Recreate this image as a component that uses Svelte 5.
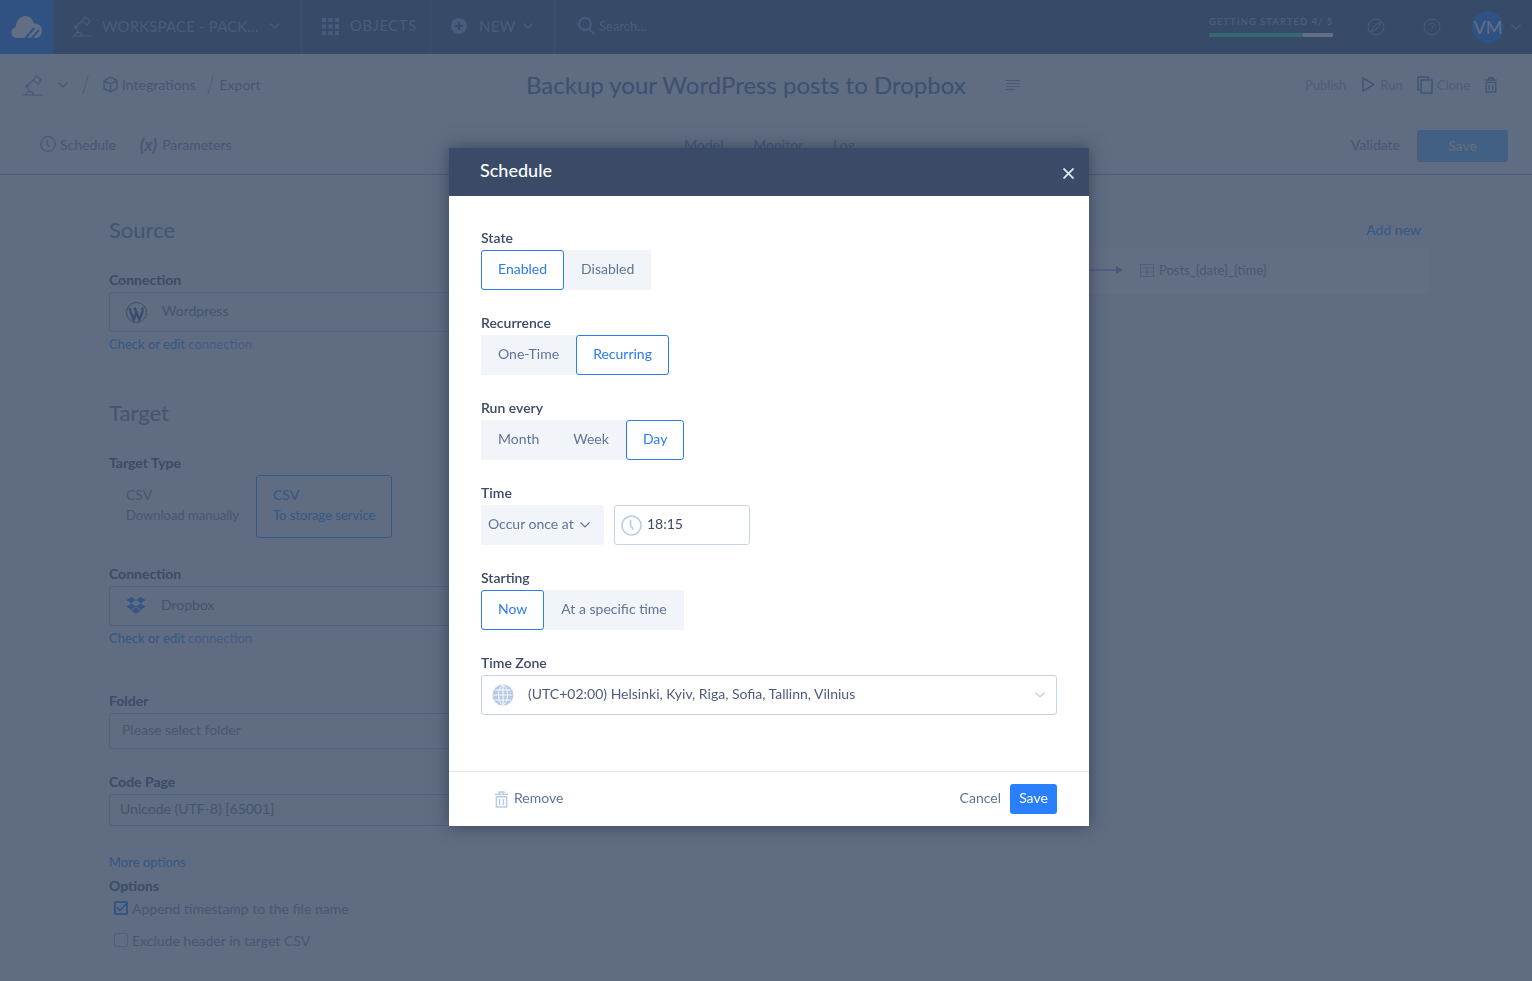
<script>
  let state_ = $state("Enabled");
  let recurrence = $state("Recurring");
  let runEvery = $state("Day");
  let starting = $state("Now");

  const groups = [
    { label: "State", options: ["Enabled", "Disabled"], get: () => state_, set: (v) => (state_ = v) },
    { label: "Recurrence", options: ["One-Time", "Recurring"], get: () => recurrence, set: (v) => (recurrence = v) },
    { label: "Run every", options: ["Month", "Week", "Day"], get: () => runEvery, set: (v) => (runEvery = v) },
  ];
</script>

{#snippet lamp(cls)}
  <svg class={cls} viewBox="0 0 20 22" fill="none" stroke="currentColor" stroke-width="1.100">
    <path d="M0 21h20M3 20.500c0-2 1.500-3 3.500-3s3.500 1 3.500 3M6 17.500 4 12l6-6M4 12l-1.500 1" />
    <path d="m10 6 3-4 5 3.500-2.500 4.500z" />
    <circle cx="4" cy="12" r="1.200" />
  </svg>
{/snippet}

{#snippet chevron(cls)}
  <svg class={cls} viewBox="0 0 10 6" fill="none" stroke="currentColor" stroke-width="1.200"><path d="m.5.5 4.500 4.500L9.500.5" /></svg>
{/snippet}

{#snippet clock(cls)}
  <svg class={cls} viewBox="0 0 22 22" fill="none" stroke="currentColor" stroke-width="1.700">
    <circle cx="11" cy="11" r="10" />
    <path d="M10 5v6.500l3 3.500" />
  </svg>
{/snippet}

{#snippet trash(cls)}
  <svg class={cls} viewBox="0 0 16 18" fill="none" stroke="currentColor" stroke-width="1.500">
    <path d="M1 3.500h14M5.500 3V1h5v2M2.500 6h11v11h-11zM6 8.500V15M10 8.500V15" />
  </svg>
{/snippet}

<div class="page">
  <header class="topbar">
    <div class="logo">
      <svg viewBox="0 0 32 24" width="32" height="24">
        <path fill="#fff" d="M6 23a5.500 5.500 0 0 1-1.500-10.800C5 6 9 1 14 1c4.500 0 8 3 9 7.500 4-.5 8 2.500 8 7.200 0 4-3 7.300-7 7.300z" />
        <path stroke="#6faeff" stroke-width="2" d="M14 24 23 13M20 24l8-9" />
      </svg>
    </div>
    <div class="top-item workspace">
      {@render lamp("top-lamp")}
      <span>WORKSPACE - PACK...</span>
      {@render chevron("chev")}
    </div>
    <div class="top-item objects">
      <svg width="17" height="17" viewBox="0 0 17 17" fill="currentColor">
        {#each [0, 6.500, 13] as y}
          {#each [0, 6.500, 13] as x}
            <rect {x} {y} width="4" height="4" />
          {/each}
        {/each}
      </svg>
      <span>OBJECTS</span>
    </div>
    <div class="top-item newitem">
      <svg width="16" height="16" viewBox="0 0 16 16">
        <circle cx="8" cy="8" r="8" fill="currentColor" />
        <path d="M8 4v8M4 8h8" stroke="#8397ae" stroke-width="2" />
      </svg>
      <span>NEW</span>
      {@render chevron("chev")}
    </div>
    <div class="top-search">
      <svg width="17" height="18" viewBox="0 0 17 18" fill="none" stroke="currentColor" stroke-width="1.800">
        <circle cx="7" cy="7" r="6" /><path d="m11 11.500 5 5.500" />
      </svg>
      <span>Search...</span>
    </div>
    <div class="top-right">
      <div class="getting">
        <span>GETTING STARTED 4/ 5</span>
        <div class="progress"><div class="progress-fill"></div></div>
      </div>
      <svg class="round-icon" viewBox="0 0 18 18" fill="none" stroke="currentColor">
        <circle cx="9" cy="9" r="8" />
        <path d="m4 14 3.500-6.500L14 4l-3.500 6.500z" />
      </svg>
      <svg class="round-icon help" viewBox="0 0 18 18" fill="none" stroke="currentColor">
        <circle cx="9" cy="9" r="8" />
        <path d="M6.800 7c0-3 4.600-3 4.600 0 0 1.800-2.400 1.800-2.400 3.800M9 12.300v1.200" />
      </svg>
      <div class="avatar">VM</div>
      {@render chevron("chev avatar-chev")}
    </div>
  </header>

  <div class="crumbs">
    <div class="crumb-left">
      {@render lamp("crumb-lamp")}
      {@render chevron("chev crumb-chev")}
      <span class="slash first"></span>
      <svg class="cube" width="15" height="17" viewBox="0 0 15 17" fill="none" stroke="currentColor" stroke-width="1.500">
        <path d="m7.500 1 6.500 3.500v8L7.500 16 1 12.500v-8zM1.500 5l6 3 6-3M7.500 8v8" />
      </svg>
      <span class="crumb-text">Integrations</span>
      <span class="slash"></span>
      <span class="crumb-text export">Export</span>
    </div>
    <h1>Backup your WordPress posts to Dropbox</h1>
    <svg class="lines" width="14" height="12" viewBox="0 0 14 12" stroke="currentColor">
      <path d="M0 1.500h14M0 4.500h14M0 7.500h14M0 10.500h9" />
    </svg>
    <div class="crumb-actions">
      <span class="publish">Publish</span>
      <svg width="13" height="15" viewBox="0 0 13 15" fill="none" stroke="currentColor" stroke-width="1.500"><path d="m1 1 11 6.500L1 14z" /></svg>
      <span class="run">Run</span>
      <svg width="16" height="18" viewBox="0 0 16 18" fill="none" stroke="currentColor" stroke-width="1.500"><path d="M3 14H1V1h10v2M4 4h11v13H4z" /></svg>
      <span class="clone">Clone</span>
      {@render trash("crumb-trash")}
    </div>
  </div>

  <div class="toolbar">
    <div class="tool-left">
      {@render clock("tool-clock")}
      <span class="tool-schedule">Schedule</span>
      <span class="fx">(x)</span>
      <span>Parameters</span>
    </div>
    <nav class="tabs">
      <span class="tab-active">Model</span>
      <span>Monitor</span>
      <span>Log</span>
    </nav>
    <div class="tool-right">
      <span>Validate</span>
      <button class="page-save">Save</button>
    </div>
  </div>

  <main class="content">
    <section class="form">
      <h2>Source</h2>
      <div class="flabel conn1">Connection</div>
      <div class="field tall"><svg class="wp" viewBox="0 0 22 22" fill="none" stroke="currentColor">
          <circle cx="11" cy="11" r="10.500" />
          <path stroke-width="2.400" d="m3.500 6.500 4.500 12 3-8-2-4.500M9 6.500l5 12 3.500-9c.5-1.500 0-2.500-.8-3.500" />
        </svg><span>Wordpress</span></div>
      <div class="hint"><em>Check or edit</em> connection</div>

      <h2 class="target">Target</h2>
      <div class="flabel type">Target Type</div>
      <div class="cards">
        <div class="card"><div>CSV</div><small>Download manually</small></div>
        <div class="card on"><div>CSV</div><small>To storage service</small></div>
      </div>

      <div class="flabel conn2">Connection</div>
      <div class="field tall"><svg class="db" viewBox="0 0 22 20" fill="currentColor">
          <path d="m6 0 5 3.200-5 3.300L1 3.200zM16 0l5 3.200-5 3.300-5-3.300zM6 6.800l5 3.200-5 3.300L1 10zM16 6.800l5 3.200-5 3.300-5-3.300zM11 11l5 3.300-5 3.200-5-3.200z" />
        </svg><span>Dropbox</span></div>
      <div class="hint"><em>Check or edit</em> connection</div>

      <div class="flabel folder">Folder</div>
      <div class="field mid placeholder"><span>Please select folder</span></div>
      <div class="flabel code">Code Page</div>
      <div class="field short"><span>Unicode (UTF-8) [65001]</span></div>

      <div class="more">More options</div>
      <div class="flabel options">Options</div>
      <div class="check first"><span class="box on">
          <svg width="14" height="14" viewBox="0 0 14 14" fill="none" stroke="currentColor" stroke-width="1.800"><path d="m3 6.500 3 3L13 2" /></svg>
        </span>Append timestamp to the file name</div>
      <div class="check"><span class="box"></span>Exclude header in target CSV</div>
    </section>

    <aside class="side">
      <div class="add-new">Add new</div>
      <div class="band">
        <svg class="arrow" width="36" height="8" viewBox="0 0 36 8"><path d="M0 4h30" stroke="#aec5ed" stroke-width="1.300" /><path d="m29 0 7 4-7 4z" fill="#aec5ed" /></svg>
        <svg class="table" width="14" height="14" viewBox="0 0 14 14" fill="none" stroke="currentColor"><rect x=".5" y="1.500" width="13" height="12" /><path d="M.5 5h13M.5 9h13M7 5v8.500" /></svg>
        <span>Posts_{"{"}date{"}"}_{"{"}time{"}"}</span>
      </div>
    </aside>
  </main>
</div>

<div class="overlay">
  <div class="modal">
    <div class="modal-head">
      <span>Schedule</span>
      <svg width="11" height="11" viewBox="0 0 11 11" stroke="#dfe7f4" stroke-width="1.800"><path d="m.5.5 10 10M10.500.5l-10 10" /></svg>
    </div>
    <div class="modal-body">
      {#each groups as g}
        <div class="group">
          <div class="label">{g.label}</div>
          <div class="segments">
            {#each g.options as o}
              <button class="seg" class:active={g.get() === o} onclick={() => g.set(o)}>{o}</button>
            {/each}
          </div>
        </div>
      {/each}

      <div class="group">
        <div class="label">Time</div>
        <div class="time-row">
          <div class="occur"><span>Occur once at</span> {@render chevron("occur-chev")}</div>
          <div class="time-input">{@render clock("time-clock")}<span>18:15</span></div>
        </div>
      </div>

      <div class="group">
        <div class="label">Starting</div>
        <div class="segments">
          {#each ["Now", "At a specific time"] as o}
            <button class="seg" class:active={starting === o} onclick={() => (starting = o)}>{o}</button>
          {/each}
        </div>
      </div>

      <div class="group">
        <div class="label">Time Zone</div>
        <div class="zone">
          <svg class="globe" width="22" height="22" viewBox="0 0 22 22">
            <circle cx="11" cy="11" r="10.500" fill="#b7cbe8" />
            <g fill="none" stroke="#fff" stroke-width=".9">
              <ellipse cx="11" cy="11" rx="4.500" ry="9.500" />
              <path d="M11 1v20M1.500 11h19M3 6h16M3 16h16" />
            </g>
          </svg>
          <span>(UTC+02:00) Helsinki, Kyiv, Riga, Sofia, Tallinn, Vilnius</span>
          {@render chevron("zone-chev")}
        </div>
      </div>
    </div>
    <div class="modal-foot">
      <button class="remove">{@render trash("remove-icon")}<span>Remove</span></button>
      <button class="cancel">Cancel</button>
      <button class="save">Save</button>
    </div>
  </div>
</div>

<style>
  :global(body) {
    font-family: Lato, "Liberation Sans", sans-serif;
    background: #f6f8fa;
  }
  .page {
    height: 981px;
    overflow: hidden;
    color: #aebfd9;
    font-size: 14px;
  }
  :global(.chev) {
    width: 10px;
    height: 6px;
  }

  /* top bar */
  .topbar {
    height: 54px;
    background: #8397ae;
    display: flex;
    align-items: center;
    color: #b4cbed;
  }
  .logo {
    width: 53px;
    height: 54px;
    background: #6faeff;
    display: flex;
    align-items: center;
    justify-content: center;
  }
  .top-item {
    height: 54px;
    padding-bottom: 2px;
    display: flex;
    align-items: center;
    border-right: 1px solid #92a9c2;
    font-size: 15px;
    letter-spacing: .15px;
  }
  .workspace {
    width: 249px;
    padding-left: 19px;
    box-sizing: border-box;
  }
  .workspace span {
    margin-left: 10px;
  }
  .workspace :global(.chev) {
    margin-left: 11px;
  }
  :global(.top-lamp) {
    width: 20px;
    height: 22px;
  }
  .objects {
    width: 129px;
    padding-left: 20px;
    box-sizing: border-box;
    gap: 11px;
    letter-spacing: .5px;
  }
  .objects span {
    margin-top: -2px;
  }
  .newitem {
    width: 124px;
    padding-left: 20px;
    box-sizing: border-box;
    gap: 12px;
    letter-spacing: .3px;
  }
  .newitem :global(.chev) {
    margin-left: -5px;
  }
  .top-search {
    display: flex;
    align-items: center;
    margin-left: 23px;
    gap: 4px;
    font-size: 13px;
    padding-bottom: 2px;
  }
  .top-right {
    margin-left: auto;
    display: flex;
    align-items: center;
    padding-right: 11px;
  }
  .getting {
    width: 124px;
    font-size: 9.500px;
    font-weight: 700;
    letter-spacing: 1px;
    white-space: nowrap;
    padding-bottom: 2px;
  }
  .getting span {
    display: block;
    margin-bottom: 6px;
  }
  .progress {
    height: 4px;
    background: #fff;
  }
  .progress-fill {
    width: 76%;
    height: 4px;
    background: #78f0c5;
  }
  .round-icon {
    width: 18px;
    height: 18px;
    margin-left: 34px;
  }
  .round-icon.help {
    margin-left: 38px;
  }
  .avatar {
    width: 32px;
    height: 32px;
    border-radius: 50%;
    margin-left: 31px;
    background: #6faeff;
    color: #fff;
    font-size: 18px;
    display: flex;
    align-items: center;
    justify-content: center;
  }
  :global(.avatar-chev) {
    margin-left: 7px;
  }

  /* breadcrumb row */
  .crumbs {
    height: 64px;
    padding-bottom: 3px;
    box-sizing: border-box;
    display: flex;
    align-items: center;
    color: #aebfd9;
  }
  .crumb-left {
    display: flex;
    align-items: center;
    padding-left: 23px;
    width: 526px;
    box-sizing: border-box;
  }
  :global(.crumb-lamp) {
    width: 20px;
    height: 22px;
  }
  :global(.crumb-chev) {
    margin-left: 15px;
  }
  .slash {
    width: 1px;
    height: 20px;
    background: #c5d1e5;
    transform: rotate(16deg);
    margin: 0 8px 0 15px;
  }
  .slash.first {
    margin: 0 17px 0 17px;
  }
  .cube {
    margin-right: 4px;
  }
  h1 {
    margin: 0;
    font-size: 24px;
    font-weight: 400;
    color: #97a9c2;
    white-space: nowrap;
    width: 480px;
  }
  .crumb-actions {
    margin-left: auto;
    padding-right: 34px;
    display: flex;
    align-items: center;
    font-size: 13px;
    color: #c5d1e5;
  }
  .crumb-actions :global(svg) {
    color: #a4b5d2;
  }
  .publish {
    margin-right: 16px;
  }
  .run {
    margin: 0 14px 0 5px;
  }
  .clone {
    margin: 0 14px 0 4px;
  }
  :global(.crumb-trash) {
    width: 14px;
    height: 18px;
  }

  /* toolbar */
  .toolbar {
    height: 57px;
    padding-bottom: 4px;
    box-sizing: border-box;
    border-bottom: 1px solid #c5d1e5;
    display: flex;
    align-items: center;
    color: #aebfd9;
  }
  .tool-left {
    display: flex;
    align-items: center;
    padding-left: 40px;
    width: 684px;
    box-sizing: border-box;
  }
  :global(.tool-clock) {
    width: 16px;
    height: 16px;
  }
  .tool-schedule {
    margin: 0 24px 0 4px;
  }
  .fx {
    font-style: italic;
    font-weight: 700;
    font-size: 17px;
    margin-right: 5px;
  }
  .tabs {
    display: flex;
    gap: 30px;
  }
  .tab-active {
    color: #92c5ff;
  }
  .tool-right {
    margin-left: auto;
    display: flex;
    align-items: center;
    gap: 17px;
    padding-right: 24px;
  }
  .page-save {
    width: 91px;
    height: 32px;
    margin-top: 3px;
    border: 0;
    border-radius: 3px;
    background: #a3d6ff;
    color: #fff;
    font: inherit;
  }

  /* page content */
  .content {
    display: flex;
    padding-left: 109px;
  }
  .form {
    width: 700px;
    flex: none;
  }
  h2 {
    margin: 42px 0 0;
    font-size: 22px;
    line-height: 26px;
    font-weight: 400;
    color: #a9b4c8;
  }
  h2.target {
    margin-top: 48px;
  }
  .flabel {
    font-size: 14px;
    line-height: 17px;
    color: #929ab4;
    font-weight: 700;
    margin-bottom: 4px;
  }
  .conn1 {
    margin-top: 28px;
  }
  .type {
    margin-top: 28px;
  }
  .conn2 {
    margin-top: 27px;
  }
  .folder {
    margin-top: 46px;
  }
  .code {
    margin-top: 24px;
  }
  .options {
    margin-top: 7px;
  }
  .field {
    box-sizing: border-box;
    display: flex;
    align-items: center;
    border: 1px solid #c5dcff;
    border-radius: 3px;
    color: #a9b4c8;
  }
  .field span {
    margin-top: -3px;
  }
  .field.tall {
    height: 40px;
    gap: 15px;
    padding-left: 16px;
  }
  .field.mid {
    height: 36px;
    padding-left: 12px;
  }
  .field.short {
    height: 32px;
    padding-left: 10px;
  }
  .placeholder {
    color: #b5bdcc;
  }
  .wp {
    width: 21px;
    height: 21px;
    color: #929ab4;
  }
  .db {
    width: 22px;
    height: 19px;
    margin: 0 -1px 0 -1px;
    color: #88b6ff;
  }
  .hint {
    font-size: 13px;
    line-height: 16px;
    margin-top: 4px;
    color: #a8cbff;
  }
  .hint em {
    font-style: normal;
    color: #83bfff;
  }
  .cards {
    display: flex;
  }
  .card {
    box-sizing: border-box;
    width: 147px;
    height: 63px;
    padding: 9px 0 0 16px;
    color: #b5bdcc;
    border: 1px solid transparent;
    font-size: 14px;
    line-height: 19px;
  }
  .card small {
    display: block;
    font-size: 13px;
    margin-top: 2px;
  }
  .card.on {
    width: 136px;
    color: #83bfff;
    border-color: #83bfff;
    border-radius: 3px;
    padding-left: 16px;
  }
  .more {
    margin-top: 28px;
    font-size: 13px;
    line-height: 16px;
    color: #83bfff;
  }
  .check {
    display: flex;
    align-items: center;
    gap: 4px;
    height: 18px;
    margin: 14px 0 0 5px;
    color: #aebfd9;
  }
  .check.first {
    margin-top: 5px;
  }
  .box {
    box-sizing: border-box;
    width: 14px;
    height: 14px;
    border: 1px solid #cbd6ea;
    border-radius: 2px;
    color: #6fb9ff;
    display: flex;
  }
  .box.on {
    border-color: #6fb9ff;
    border-width: 2px;
  }
  .box svg {
    flex: none;
    margin: -2px;
  }
  .side {
    flex: 1;
    margin-right: 103px;
    padding-top: 46px;
  }
  .add-new {
    text-align: right;
    padding-right: 8px;
    height: 27px;
    line-height: 17px;
    color: #83bfff;
  }
  .band {
    height: 46px;
    background: #fff;
    display: flex;
    align-items: center;
    gap: 5px;
    padding: 0 0 2px 311px;
    box-sizing: border-box;
    font-size: 13px;
    color: #aebfd9;
  }
  .arrow {
    margin-right: 12px;
    margin-left: -33px;
  }
  .table {
    color: #cbd6ea;
  }

  /* modal */
  .overlay {
    position: fixed;
    inset: 0;
    background: rgba(14, 32, 65, .65);
    padding: 148px 0 0 449px;
    box-sizing: border-box;
    font-size: 14px;
  }
  .modal {
    width: 640px;
    background: #fff;
    box-shadow: 0 0 16px rgba(20, 30, 50, .5);
  }
  .modal-head {
    height: 48px;
    background: #3a4a67;
    color: #fff;
    display: flex;
    align-items: center;
    justify-content: space-between;
    padding: 0 15px 4px 31px;
    box-sizing: border-box;
    font-size: 18px;
    font-weight: 500;
  }
  .modal-head svg {
    margin-top: 6px;
  }
  .modal-body {
    padding: 34px 32px 56px 32px;
    height: 576px;
    box-sizing: border-box;
    border-bottom: 1px solid #e2e4e8;
    display: flex;
    flex-direction: column;
    gap: 25px;
  }
  .label {
    font-size: 14px;
    line-height: 15px;
    font-weight: 600;
    color: #3a4a67;
    margin-bottom: 5px;
    height: 15px;
  }
  .group {
    height: 60px;
  }
  .segments {
    display: flex;
    align-items: stretch;
    height: 40px;
    width: fit-content;
    background: #f1f4f9;
  }
  .seg {
    border: 0;
    background: transparent;
    padding: 0 17px 3px;
    height: 40px;
    font: inherit;
    font-size: 14px;
    color: #607498;
    cursor: pointer;
    border-radius: 3px;
  }
  .seg.active {
    background: #fff;
    color: #2b7bf5;
    border: 1px solid #2b7bf5;
    padding: 0 16px 3px;
  }
  .time-row {
    display: flex;
    gap: 10px;
  }
  .occur {
    box-sizing: border-box;
    width: 123px;
    height: 40px;
    background: #f1f4f9;
    border-radius: 3px;
    color: #607498;
    padding-left: 7px;
    display: flex;
    align-items: center;
    gap: 6px;
  }
  .occur span,
  .time-input span,
  .zone span {
    margin-top: -3px;
  }
  :global(.occur-chev) {
    width: 10px;
    height: 6px;
  }
  .time-input {
    box-sizing: border-box;
    width: 136px;
    height: 40px;
    border: 1px solid #c5d3ea;
    border-radius: 3px;
    display: flex;
    align-items: center;
    padding-left: 6px;
    gap: 5px;
    color: #3a4a67;
  }
  :global(.time-clock) {
    width: 21px;
    height: 21px;
    color: #b7cbe8;
  }
  .zone {
    box-sizing: border-box;
    width: 576px;
    height: 40px;
    border: 1px solid #c5d3ea;
    border-radius: 3px;
    display: flex;
    align-items: center;
    padding-left: 10px;
    gap: 14px;
    color: #4c5d7b;
  }
  :global(.zone-chev) {
    width: 10px;
    height: 6px;
    margin-left: auto;
    margin-right: 11px;
    color: #b7cbe8;
  }
  .modal-foot {
    height: 54px;
    display: flex;
    align-items: center;
    padding: 0 32px 0 45px;
  }
  .modal-foot button {
    font: inherit;
    font-size: 14px;
    border: 0;
    background: none;
    padding: 0 0 4px;
    color: #607498;
  }
  .modal-foot .remove {
    display: flex;
    align-items: center;
    gap: 5px;
    margin-right: auto;
    padding: 0;
  }
  .modal-foot .remove span {
    margin-top: -4px;
  }
  :global(.remove-icon) {
    width: 15px;
    height: 19px;
    color: #b7cbe8;
  }
  .modal-foot .save {
    width: 47px;
    height: 30px;
    margin-left: 9px;
    background: #2a7fff;
    border-radius: 3px;
    color: #fff;
  }
</style>
